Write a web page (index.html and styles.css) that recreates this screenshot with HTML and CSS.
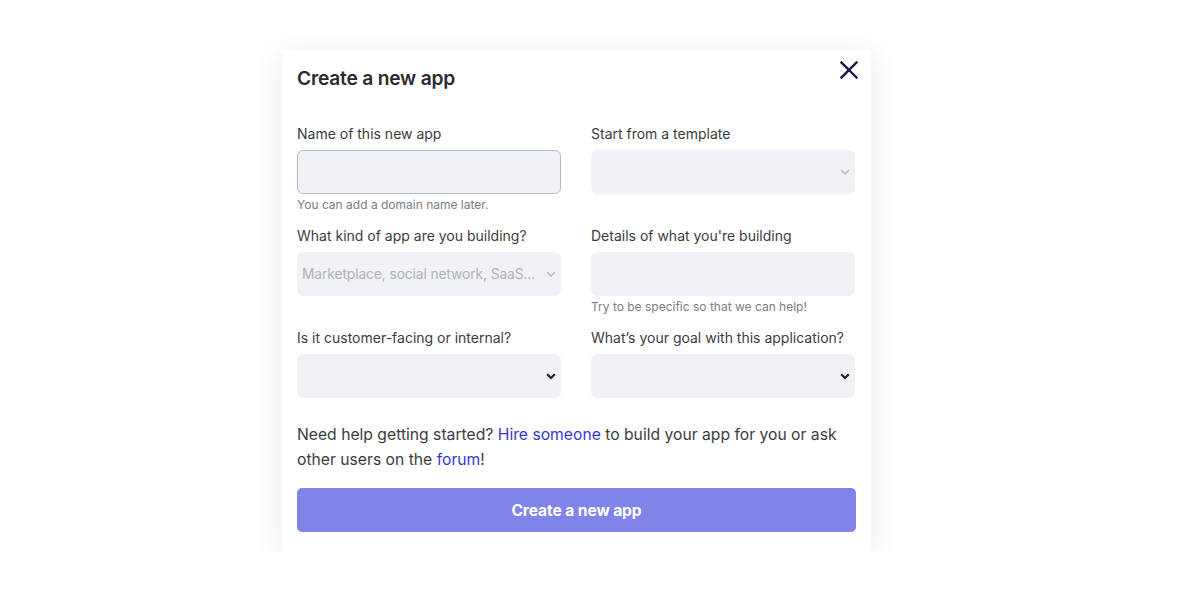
FILE: index.html
```html
<!DOCTYPE html>
<html lang="en">
<head>
<meta charset="utf-8">
<title>Create a new app</title>
<link rel="stylesheet" href="styles.css">
</head>
<body>
<div class="modal">
  <button class="close" aria-label="Close">
    <svg width="18" height="18" viewBox="0 0 18 18"><path d="M1.5 1.5 L16.5 16.5 M16.5 1.5 L1.5 16.5" stroke="#15154a" stroke-width="2.4" stroke-linecap="square" fill="none"/></svg>
  </button>
  <h1 class="title">Create a new app</h1>
  <div class="grid">
    <div class="field">
      <label class="label">Name of this new app</label>
      <div class="input input-focus"></div>
      <div class="help">You can add a domain name later.</div>
    </div>
    <div class="field">
      <label class="label">Start from a template</label>
      <div class="input select">
        <span class="placeholder"></span>
        <svg class="chev" width="10" height="6" viewBox="0 0 10 6"><path d="M1 1 L5 5 L9 1" stroke="#b9bcc6" stroke-width="1.6" fill="none"/></svg>
      </div>
    </div>
    <div class="field">
      <label class="label">What kind of app are you building?</label>
      <div class="input select">
        <span class="placeholder">Marketplace, social network, SaaS...</span>
        <svg class="chev" width="10" height="6" viewBox="0 0 10 6"><path d="M1 1 L5 5 L9 1" stroke="#b9bcc6" stroke-width="1.6" fill="none"/></svg>
      </div>
    </div>
    <div class="field">
      <label class="label">Details of what you're building</label>
      <div class="input"></div>
      <div class="help">Try to be specific so that we can help!</div>
    </div>
    <div class="field">
      <label class="label">Is it customer-facing or internal?</label>
      <div class="input select">
        <span class="placeholder"></span>
        <svg class="chev" width="10" height="7" viewBox="0 0 10 7"><path d="M1.2 1.2 L5 5 L8.8 1.2" stroke="#1f1f24" stroke-width="2.2" fill="none"/></svg>
      </div>
    </div>
    <div class="field">
      <label class="label">What’s your goal with this application?</label>
      <div class="input select">
        <span class="placeholder"></span>
        <svg class="chev" width="10" height="7" viewBox="0 0 10 7"><path d="M1.2 1.2 L5 5 L8.8 1.2" stroke="#1f1f24" stroke-width="2.2" fill="none"/></svg>
      </div>
    </div>
  </div>
  <p class="note">Need help getting started? <a href="#">Hire someone</a> to build your app for you or ask other users on the <a href="#">forum</a>!</p>
  <button class="submit">Create a new app</button>
</div>
</body>
</html>
```
FILE: styles.css
```css
* { box-sizing: border-box; }
html, body { margin: 0; background: #ffffff; }
body {
  font-family: Inter, "Noto Sans", sans-serif;
  color: #3a3a3e;
  padding: 50px 0 0 282px;
}
.modal {
  position: relative;
  width: 589px;
  background: #fff;
  border-radius: 4px;
  box-shadow: 0 4px 30px rgba(0, 0, 0, 0.09);
  padding: 14px 15px 20px 15px;
}
.close {
  position: absolute;
  right: 13px;
  top: 11px;
  width: 18px;
  height: 18px;
  padding: 0;
  border: 0;
  background: none;
  display: flex;
}
.title {
  margin: 0;
  font-size: 19.2px;
  line-height: 28px;
  font-weight: 600;
  color: #2b2b2f;
  letter-spacing: -0.2px;
}
.grid {
  margin-top: 32px;
  display: grid;
  grid-template-columns: 264px 264px;
  column-gap: 30px;
  row-gap: 12px;
  grid-template-rows: 90px 90px 71px;
}
.field { display: flex; flex-direction: column; }
.label {
  font-size: 14px;
  line-height: 20px;
  color: #3c3c40;
  margin-bottom: 6px;
}
.input {
  height: 44px;
  background: #f1f2f6;
  border-radius: 6px;
}
.input-focus {
  border: 1px solid #b6bccb;
}
.select {
  display: flex;
  align-items: center;
  justify-content: space-between;
  gap: 8px;
  padding: 0 5px 0 5px;
}
.placeholder {
  font-size: 13.8px;
  color: #b2b3ba;
  white-space: nowrap;
  overflow: hidden;
  letter-spacing: -0.1px;
}
.chev { flex-shrink: 0; }
.help {
  margin-top: 3px;
  font-size: 12px;
  line-height: 16px;
  color: #7b7c84;
}
.note {
  margin: 23px 0 0 0;
  font-size: 15.7px;
  line-height: 25px;
  color: #3c3c40;
}
.note a { color: #3737d6; text-decoration: none; }
.submit {
  display: block;
  width: 559px;
  height: 44px;
  margin-top: 16px;
  border: 0;
  border-radius: 5px;
  background: #8083e8;
  color: #fff;
  font-family: inherit;
  font-size: 15.6px;
  font-weight: 700;
  letter-spacing: -0.1px;
}
```
